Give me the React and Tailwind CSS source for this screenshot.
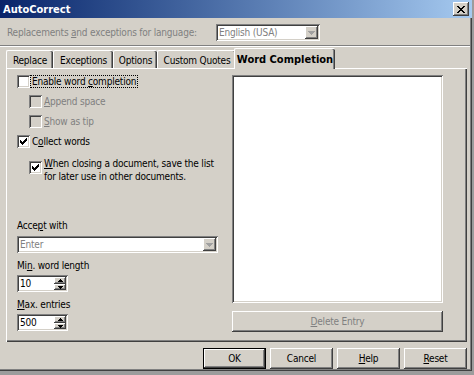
import React from "react";

const raised =
  "shadow-[inset_-1px_-1px_#404040,inset_1px_1px_#ffffff,inset_-2px_-2px_#808080,inset_2px_2px_#d4d0c8]";
const sunken =
  "shadow-[inset_1px_1px_#808080,inset_-1px_-1px_#ffffff,inset_2px_2px_#404040,inset_-2px_-2px_#d4d0c8]";

function U({ children }) {
  return <span className="underline underline-offset-[1px]">{children}</span>;
}

function CheckMark() {
  const cols = [2, 3, 4, 3, 2, 1, 0];
  return (
    <svg width="7" height="7" viewBox="0 0 7 7" shapeRendering="crispEdges">
      {cols.map((y, x) => (
        <rect key={x} x={x} y={y} width="1" height="3" fill="#000" />
      ))}
    </svg>
  );
}

function Check({ checked, disabled }) {
  return (
    <div
      className={
        "w-[13px] h-[13px] shrink-0 flex items-center justify-center " +
        (disabled ? "bg-[#d4d0c8] " : "bg-white ") +
        sunken
      }
    >
      {checked && <CheckMark />}
    </div>
  );
}

function ArrowDown({ color = "#000" }) {
  return (
    <svg width="7" height="4" viewBox="0 0 7 4" shapeRendering="crispEdges">
      <rect x="0" y="0" width="7" height="1" fill={color} />
      <rect x="1" y="1" width="5" height="1" fill={color} />
      <rect x="2" y="2" width="3" height="1" fill={color} />
      <rect x="3" y="3" width="1" height="1" fill={color} />
    </svg>
  );
}

function SmallArrow({ up }) {
  return (
    <svg width="5" height="3" viewBox="0 0 5 3" shapeRendering="crispEdges">
      {up ? (
        <>
          <rect x="2" y="0" width="1" height="1" fill="#000" />
          <rect x="1" y="1" width="3" height="1" fill="#000" />
          <rect x="0" y="2" width="5" height="1" fill="#000" />
        </>
      ) : (
        <>
          <rect x="0" y="0" width="5" height="1" fill="#000" />
          <rect x="1" y="1" width="3" height="1" fill="#000" />
          <rect x="2" y="2" width="1" height="1" fill="#000" />
        </>
      )}
    </svg>
  );
}

function Combo({ text, width }) {
  return (
    <div
      className={
        "h-[17px] bg-white flex items-center pl-[3px] pr-[2px] " + sunken
      }
      style={{ width }}
    >
      <span className="flex-1 text-[#808080] leading-[13px]">{text}</span>
      <div
        className={
          "w-[13px] h-[13px] bg-[#d4d0c8] flex items-center justify-center " +
          raised
        }
      >
        <ArrowDown color="#a0a0a0" />
      </div>
    </div>
  );
}

function Spinner({ value }) {
  return (
    <div
      className={
        "w-[51px] h-[17px] bg-white flex items-center pl-[3px] pr-[2px] " +
        sunken
      }
    >
      <span className="flex-1 leading-[13px]">{value}</span>
      <div className="flex flex-col w-[12px] h-[13px]">
        <div
          className={
            "h-[7px] bg-[#d4d0c8] flex items-center justify-center " + raised
          }
        >
          <SmallArrow up />
        </div>
        <div
          className={
            "h-[6px] bg-[#d4d0c8] flex items-center justify-center " + raised
          }
        >
          <SmallArrow />
        </div>
      </div>
    </div>
  );
}

function Tab({ children, selected, w }) {
  if (selected) {
    return (
      <div
        className="relative z-10 -mx-[2px] -mb-[1px] h-[21px] bg-[#d4d0c8] flex items-start justify-center pt-[4px] font-bold text-[11px] tracking-normal border-t border-l border-white shadow-[inset_-1px_0_#404040,inset_-2px_0_#808080] rounded-t-[2px]"
        style={{ width: w }}
      >
        {children}
      </div>
    );
  }
  return (
    <div
      className="h-[18px] bg-[#d4d0c8] flex items-start justify-center pt-[3px] border-t border-l border-white shadow-[inset_-1px_0_#404040,inset_-2px_0_#808080] rounded-t-[2px]"
      style={{ width: w }}
    >
      {children}
    </div>
  );
}

function Btn({ children, def, disabled, className = "" }) {
  return (
    <div
      className={
        "flex items-center justify-center bg-[#d4d0c8] " +
        (def ? "border border-black " : "") +
        (disabled ? "text-[#808080] " : "") +
        className
      }
    >
      <div
        className={
          "w-full h-full flex items-center justify-center " + raised
        }
      >
        {children}
      </div>
    </div>
  );
}

export default function App() {
  return (
    <div className="w-[474px] h-[375px] bg-[#9c9c9c] font-['DejaVu_Sans_Condensed','Liberation_Sans',Arial,sans-serif] text-[10px] tracking-[-0.2px] leading-[13px] text-black overflow-hidden">
      <div className="w-[472px] h-[371px] bg-[#d4d0c8] flex flex-col shadow-[inset_-1px_-1px_#404040,inset_-2px_-2px_#808080]">
        {/* title bar */}
        <div className="h-[18px] shrink-0 bg-gradient-to-r from-[#0a246a] to-[#a6caf0] flex items-center justify-between pl-[3px] pr-[3px]">
          <span className="text-white font-bold text-[11px] tracking-normal">AutoCorrect</span>
          <div
            className={
              "w-[16px] h-[14px] bg-[#d4d0c8] flex items-center justify-center " +
              raised
            }
          >
            <svg width="8" height="7" viewBox="0 0 8 7" shapeRendering="crispEdges">
              {[0, 1, 2, 3, 4, 5, 6].map((i) => (
                <React.Fragment key={i}>
                  <rect x={i} y={i} width="2" height="1" fill="#000" />
                  <rect x={6 - i} y={i} width="2" height="1" fill="#000" />
                </React.Fragment>
              ))}
            </svg>
          </div>
        </div>

        {/* language row */}
        <div className="mt-[6px] h-[17px] flex items-center pl-[7px]">
          <span className="w-[209px] text-[#808080] whitespace-nowrap">
            Replacements <U>a</U>nd exceptions for language:
          </span>
          <Combo text="English (USA)" width={104} />
        </div>

        {/* separator */}
        <div className="mt-[4px] border-t border-[#808080] border-b border-b-white mr-[2px]" />

        {/* tabs */}
        <div className="mt-[1px] h-[20px] flex items-end pl-[6px] whitespace-nowrap">
          <Tab w={47}>Replace</Tab>
          <Tab w={60}>Exceptions</Tab>
          <Tab w={44}>Options</Tab>
          <Tab w={79}>Custom Quotes</Tab>
          <Tab w={101} selected>
            Word Completion
          </Tab>
        </div>

        {/* panel */}
        <div className="ml-[6px] w-[461px] h-[274px] border-t border-l border-white shadow-[inset_-1px_-1px_#404040,inset_-2px_-2px_#808080] flex pt-[6px] pl-[10px]">
          <div className="w-[215px] flex flex-col whitespace-nowrap">
            <div className="h-[13px] flex items-center">
              <Check />
              <span className="px-[1px] border border-dotted border-black leading-[11px]">
                Enable word <U>c</U>ompletion
              </span>
            </div>
            <div className="mt-[7px] h-[13px] flex items-center pl-[12px] text-[#808080]">
              <Check disabled />
              <span className="ml-[2px]">
                <U>A</U>ppend space
              </span>
            </div>
            <div className="mt-[7px] h-[13px] flex items-center pl-[12px] text-[#808080]">
              <Check disabled />
              <span className="ml-[2px]">
                <U>S</U>how as tip
              </span>
            </div>
            <div className="mt-[7px] h-[13px] flex items-center">
              <Check checked />
              <span className="ml-[2px]">
                C<U>o</U>llect words
              </span>
            </div>
            <div className="mt-[9px] flex pl-[12px]">
              <div className="mt-[4px]">
                <Check checked />
              </div>
              <span className="ml-[2px]">
                <U>W</U>hen closing a document, save the list
                <br />
                for later use in other documents.
              </span>
            </div>
            <div className="mt-[36px]">
              Acce<U>p</U>t with
            </div>
            <div className="mt-[4px]">
              <Combo text="Enter" width={201} />
            </div>
            <div className="mt-[6px]">
              Mi<U>n</U>. word length
            </div>
            <div className="mt-[3px]">
              <Spinner value="10" />
            </div>
            <div className="mt-[6px]">
              <U>M</U>ax. entries
            </div>
            <div className="mt-[3px]">
              <Spinner value="500" />
            </div>
          </div>
          <div className="flex flex-col">
            <div className={"w-[211px] h-[228px] bg-white " + sunken} />
            <Btn disabled className="mt-[8px] w-[211px] h-[21px]">
              <span>
                <U>D</U>elete Entry
              </span>
            </Btn>
          </div>
        </div>

        {/* buttons */}
        <div className="mt-[6px] flex justify-end gap-[4px] pr-[5px]">
          <Btn def className="w-[63px] h-[21px]">
            OK
          </Btn>
          <Btn className="w-[63px] h-[21px]">Cancel</Btn>
          <Btn className="w-[63px] h-[21px]">
            <span>
              <U>H</U>elp
            </span>
          </Btn>
          <Btn className="w-[63px] h-[21px]">
            <span>
              <U>R</U>eset
            </span>
          </Btn>
        </div>
      </div>
    </div>
  );
}
